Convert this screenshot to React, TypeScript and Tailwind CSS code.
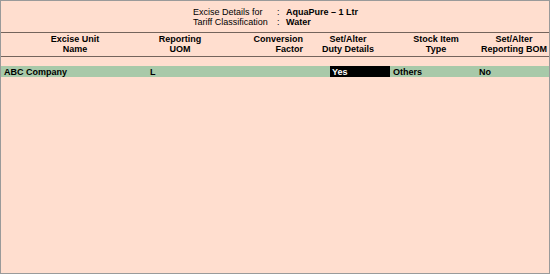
export default function App() {
  const cols = [
    { w: "w-[148px]", top: "Excise Unit", bottom: "Name", align: "text-center" },
    { w: "w-[62px]", top: "Reporting", bottom: "UOM", align: "text-center" },
    { w: "w-[92px]", top: "Conversion", bottom: "Factor", align: "text-right" },
    { w: "w-[90px]", top: "Set/Alter", bottom: "Duty Details", align: "text-center" },
    { w: "w-[86px]", top: "Stock Item", bottom: "Type", align: "text-center" },
    { w: "flex-1", top: "Set/Alter", bottom: "Reporting BOM", align: "text-center" },
  ];

  return (
    <div
      className="w-[550px] h-[274px] bg-[#ffdecf] border border-[#9a9a9a] text-black text-[9px] leading-[10px] flex flex-col"
      style={{ fontFamily: '"Liberation Sans", Arial, sans-serif' }}
    >
      {/* title block */}
      <div className="pt-[6px] pb-[5px] pl-[192px] border-b border-[#74645c]">
        <div className="flex">
          <span className="w-[84px]">Excise Details for</span>
          <span className="w-[9px]">:</span>
          <span className="font-bold">AquaPure – 1 Ltr</span>
        </div>
        <div className="flex">
          <span className="w-[84px]">Tariff Classification</span>
          <span className="w-[9px]">:</span>
          <span className="font-bold">Water</span>
        </div>
      </div>

      {/* column headers */}
      <div className="flex font-bold pt-[1px] pb-[2px] border-b border-[#74645c] whitespace-nowrap">
        {cols.map((c, i) => (
          <div key={i} className={`${c.w} ${c.align}`}>
            <div>{c.top}</div>
            <div>{c.bottom}</div>
          </div>
        ))}
      </div>

      {/* rows */}
      <div className="pt-[9px]">
        <div className="flex h-[11px] items-center font-bold bg-[#a8c9a9] whitespace-nowrap">
          <div className="w-[148px] pl-[3px]">ABC Company</div>
          <div className="w-[62px] pl-[1px]">L</div>
          <div className="w-[119px]"></div>
          <div className="w-[60px] h-full bg-black text-white pl-[2px] flex items-center">Yes</div>
          <div className="w-[87px] pl-[3px]">Others</div>
          <div className="flex-1 pl-[2px]">No</div>
        </div>
      </div>
    </div>
  );
}
